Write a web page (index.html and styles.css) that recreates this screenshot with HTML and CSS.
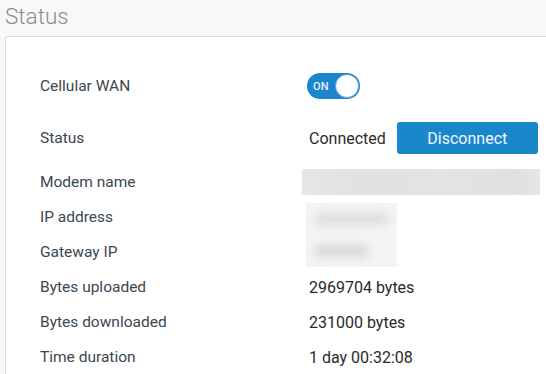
FILE: index.html
```html
<!DOCTYPE html>
<html>
<head>
<meta charset="utf-8">
<link rel="stylesheet" href="styles.css">
</head>
<body>
<h1 class="title">Status</h1>
<div class="card">
  <div class="row row-toggle">
    <div class="label">Cellular WAN</div>
    <div class="value">
      <div class="toggle"><span class="toggle-text">ON</span><span class="knob"></span></div>
    </div>
  </div>
  <div class="row row-status">
    <div class="label">Status</div>
    <div class="value">
      <span class="connected">Connected</span>
      <button class="btn">Disconnect</button>
    </div>
  </div>
  <div class="row">
    <div class="label">Modem name</div>
    <div class="value"><div class="redact redact-wide"></div></div>
  </div>
  <div class="row">
    <div class="label">IP address</div>
    <div class="value value-rel"><div class="redact redact-tall"><span class="blur-bar b1"></span><span class="blur-bar b2"></span></div></div>
  </div>
  <div class="row">
    <div class="label">Gateway IP</div>
    <div class="value"></div>
  </div>
  <div class="row">
    <div class="label">Bytes uploaded</div>
    <div class="value">2969704 bytes</div>
  </div>
  <div class="row">
    <div class="label">Bytes downloaded</div>
    <div class="value">231000 bytes</div>
  </div>
  <div class="row">
    <div class="label">Time duration</div>
    <div class="value">1 day 00:32:08</div>
  </div>
</div>
</body>
</html>
```
FILE: styles.css
```css
html, body {
  margin: 0;
  padding: 0;
  background: #f8f8f8;
  font-family: Roboto, "Liberation Sans", sans-serif;
  overflow: hidden;
}
body {
  width: 546px;
  height: 374px;
}
.title {
  margin: 0;
  padding: 3px 0 0 5px;
  height: 36px;
  box-sizing: border-box;
  font-size: 22.5px;
  font-weight: 300;
  color: #858d96;
  line-height: 26px;
}
.card {
  margin-left: 5px;
  width: 560px;
  height: 338px;
  background: #fff;
  border: 1px solid #dcdcdc;
  border-bottom: none;
  border-radius: 3px 0 0 0;
  padding: 36px 0 0 34px;
  box-sizing: border-box;
}
.row {
  display: flex;
  align-items: center;
  height: 35px;
}
.row-toggle {
  height: 26px;
  margin-bottom: 23px;
}
.row-status {
  height: 32px;
  margin-bottom: 10.5px;
}
.label {
  width: 269px;
  flex: none;
  font-size: 15.5px;
  color: #3a4752;
}
.value {
  display: flex;
  align-items: center;
  font-size: 16px;
  color: #2a2a2a;
}
.value-rel {
  position: relative;
  align-self: stretch;
}
.toggle {
  width: 53px;
  height: 26px;
  box-sizing: border-box;
  border-radius: 13px;
  background: #1b86cb;
  display: flex;
  align-items: center;
  justify-content: space-between;
  padding: 0 1px 0 6px;
  margin-left: -2px;
}
.toggle-text {
  color: #e6f1fa;
  font-size: 11px;
  font-weight: 500;
  letter-spacing: 0.2px;
}
.knob {
  width: 24px;
  height: 24px;
  border-radius: 50%;
  background: #fff;
  box-sizing: border-box;
  border: 1px solid #5aa6da;
}
.connected {
  color: #2a2a2a;
}
.btn {
  margin-left: 11px;
  width: 141px;
  height: 32px;
  border: none;
  border-radius: 3px;
  background: #1a87cc;
  color: #f2f8fd;
  font-family: inherit;
  font-size: 16px;
  padding: 0;
}
.redact {
  overflow: hidden;
  display: flex;
  flex-direction: column;
  justify-content: space-around;
}
.redact-wide {
  margin-left: -7px;
  width: 238px;
  height: 26px;
  background: linear-gradient(90deg, #e6e6e6, #e1e1e1 30%, #e4e4e4 60%, #e0e0e0 90%, #e6e6e6);
}
.redact-tall {
  position: absolute;
  left: -3px;
  top: 3.5px;
  width: 91px;
  height: 64px;
  background: #f4f4f4;
  padding: 0 8px;
  box-sizing: border-box;
}
.blur-bar {
  display: block;
  height: 12px;
  border-radius: 6px;
  background: #dedede;
  filter: blur(4px);
}
.b1 {
  width: 75px;
}
.b2 {
  width: 55px;
  background: #d8d8d8;
}
```
